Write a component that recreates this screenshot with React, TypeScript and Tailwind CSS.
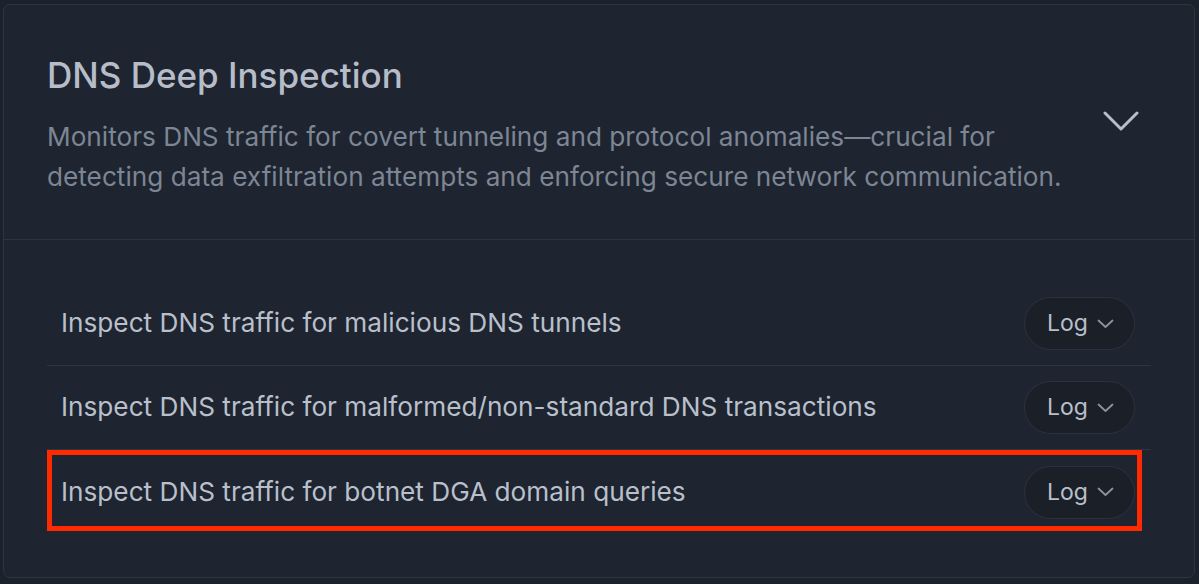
import React from "react";

const rows = [
  "Inspect DNS traffic for malicious DNS tunnels",
  "Inspect DNS traffic for malformed/non-standard DNS transactions",
  "Inspect DNS traffic for botnet DGA domain queries",
];

function LogButton() {
  return (
    <button className="flex h-[53px] w-[111px] items-center rounded-full border border-[#2b323e] bg-[#1a1f28] pl-[22px] pr-[20px]">
      <span className="text-[23px] leading-none text-[#b9c0cb]">Log</span>
      <svg className="ml-auto" width="17" height="10" viewBox="0 0 17 10" fill="none">
        <path d="M1.5 1.5 L8.5 8 L15.5 1.5" stroke="#8a939f" strokeWidth="1.8" strokeLinecap="round" strokeLinejoin="round" />
      </svg>
    </button>
  );
}

export default function App() {
  return (
    <div
      className="h-[584px] w-[1199px] bg-[#1c222b] pl-[3px] pt-[4px]"
      style={{ fontFamily: "Inter, 'Noto Sans', sans-serif" }}
    >
      <div className="flex h-[574px] w-[1192px] flex-col rounded-[7px] border border-[#2d3542] bg-[#1e2430]">
        <div className="flex h-[235px] items-center border-b border-[#2d3542] pl-[43px] pr-[55px] pt-[6px]">
          <div className="flex flex-1 flex-col">
            <div className="text-[35px] font-medium leading-[44px] text-[#b6bdc9]">DNS Deep Inspection</div>
            <div className="mt-[20px] text-[26.2px] leading-[40px] text-[#7c8694]">
              Monitors DNS traffic for covert tunneling and protocol anomalies—crucial for
              <br />
              detecting data exfiltration attempts and enforcing secure network communication.
            </div>
          </div>
          <svg width="36" height="21" viewBox="0 0 36 21" fill="none" className="mt-[-8px]">
            <path d="M2 2 L18 18 L34 2" stroke="#b8bfca" strokeWidth="3" strokeLinecap="round" strokeLinejoin="round" />
          </svg>
        </div>
        <div className="flex flex-col px-[43px] pt-[42px]">
          {rows.map((r, i) => (
            <div
              key={i}
              className={`relative flex h-[84px] items-center justify-between pl-[14px] pr-[16px] ${
                i < rows.length - 1 ? "border-b border-[#2d3542]" : ""
              }`}
            >
              <span className="text-[26.2px] leading-none text-[#b9c0cb]">{r}</span>
              <LogButton />
              {i === 2 && (
                <div className="pointer-events-none absolute left-0 top-0 h-[81px] w-[1095px] border-[5px] border-[#ff2a00]" />
              )}
            </div>
          ))}
        </div>
      </div>
    </div>
  );
}
